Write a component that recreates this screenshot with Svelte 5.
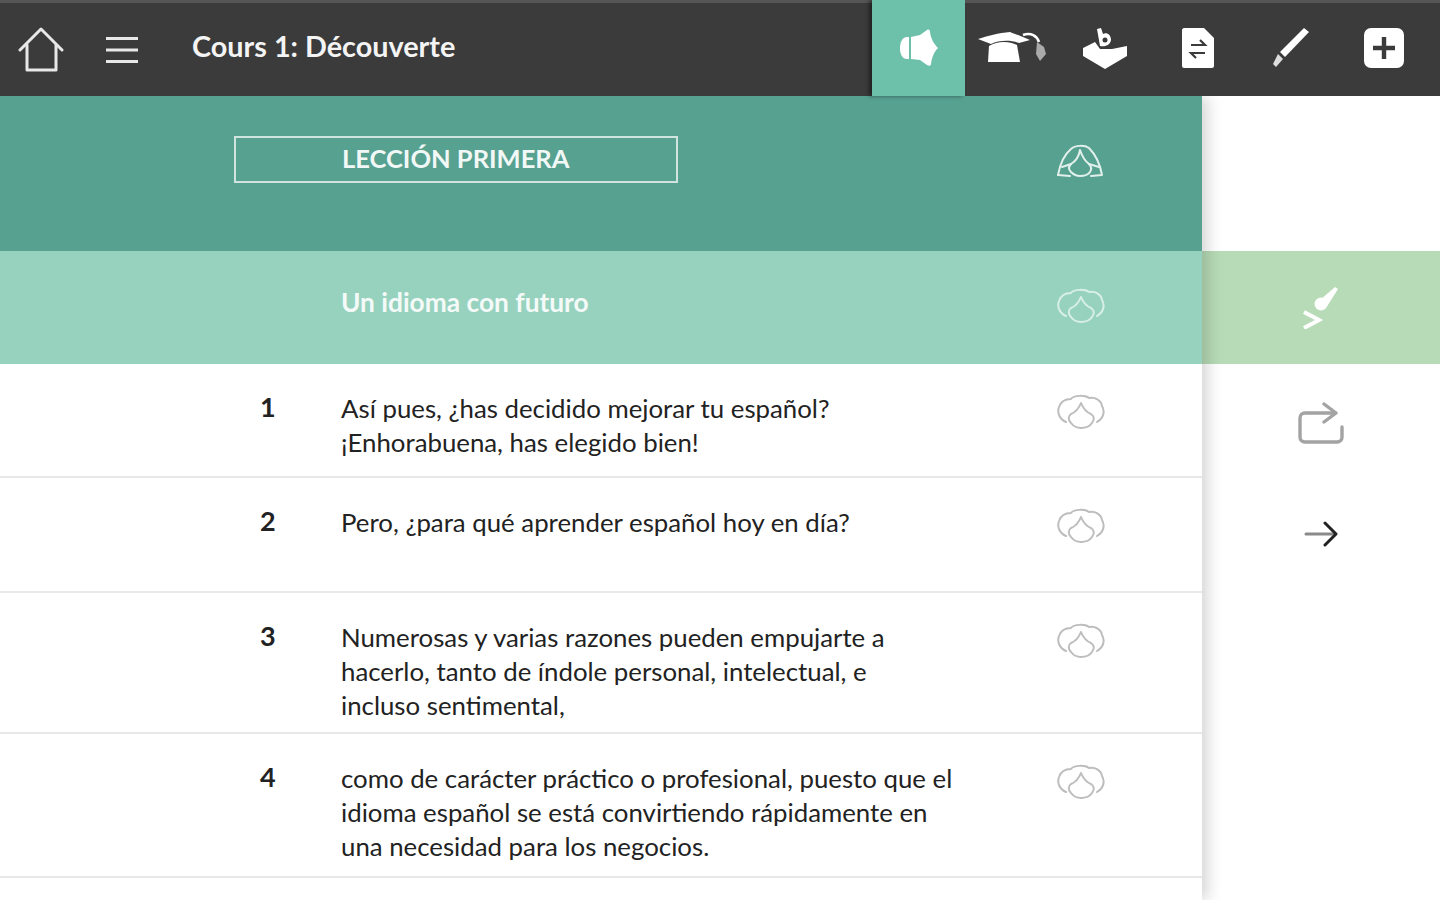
<script>
	const rows = [
		{ n: 1, lines: ['Así pues, ¿has decidido mejorar tu español?', '¡Enhorabuena, has elegido bien!'], h: 114 },
		{ n: 2, lines: ['Pero, ¿para qué aprender español hoy en día?'], h: 115 },
		{ n: 3, lines: ['Numerosas y varias razones pueden empujarte a', 'hacerlo, tanto de índole personal, intelectual, e', 'incluso sentimental,'], h: 141 },
		{ n: 4, lines: ['como de carácter práctico o profesional, puesto que el', 'idioma español se está convirtiendo rápidamente en', 'una necesidad para los negocios.'], h: 144 }
	];
</script>

{#snippet lips(cls)}
	<svg class="lips {cls}" viewBox="0 0 48 36" width="48" height="36" fill="none" stroke="currentColor" stroke-width="2" stroke-linejoin="round" stroke-linecap="round">
		<path d="M9 28C2 25 0 18 2 13C4 7 9 5 14 5C17 1 28 1 32 4C38 3 44 6 45 12C48 17 47 24 40 28" />
		<path d="M24 9C22 14 19 18 14 20C11 22 11 26 14 29C17 33 21 34 24 34C29 34 33 32 35 29C38 25 37 22 34 20C29 18 26 14 24 9Z" />
	</svg>
{/snippet}

<div class="page">
	<header class="topbar">
		<div class="nav">
			<svg class="home" viewBox="0 0 46 46" width="46" height="46" fill="none" stroke="#e8e8e8" stroke-width="3" stroke-linejoin="round" stroke-linecap="round">
				<path d="M2 24L23 3L44 24" />
				<path d="M9 19V44H38V19" />
			</svg>
			<svg class="burger" viewBox="0 0 32 26" width="32" height="26" fill="none" stroke="#e8e8e8" stroke-width="2.8">
				<path d="M0 1.5H32M0 13H32M0 24.5H32" />
			</svg>
			<span class="title">Cours 1: Découverte</span>
		</div>
		<div class="tools">
			<button class="tool active" type="button" aria-label="Audio">
				<svg viewBox="0 0 38 38" width="38" height="38" fill="#fff">
					<path d="M7 8C2 8 0 14 0 19C0 25 2 30 7 30H9V8Z" />
					<path d="M11 8L20 6L27 1C29 0 30 1 30 3C31 10 34 15 38 19C34 23 32 28 31 35C31 37 29 37 27 36L20 31L11 30Z" />
				</svg>
			</button>
			<button class="tool" type="button" aria-label="Cours">
				<svg viewBox="0 0 70 38" width="70" height="38" fill="#fff">
					<path d="M1 10C10 7 22 4 33 3C38 5 46 8 53 11L42 14C34 11 22 11 14 15Z" />
					<path d="M12 17C20 12 32 12 40 16L43 33H11Z" />
					<path d="M46 6C54 3 60 7 62 13" fill="none" stroke="#fff" stroke-width="2.6" />
					<path d="M60 13L67 18L69 25L63 32L59 25Z" fill="#aaa" />
				</svg>
			</button>
			<button class="tool" type="button" aria-label="Livre">
				<svg viewBox="0 0 46 46" width="46" height="46" fill="#fff">
					<path d="M1 23L13 17L18 24H30L45 21V31L23 44L1 31Z" />
					<path d="M15 4L19 3L21 9C25 7 29 10 29 15C28 20 24 22 18 21Z" />
					<circle cx="23" cy="15" r="2.5" fill="#3b3b3b" />
				</svg>
			</button>
			<button class="tool" type="button" aria-label="Traduction">
				<svg viewBox="0 0 34 42" width="34" height="42">
					<path d="M3 1H23L33 11V39C33 40 32 41 31 41H3C2 41 1 40 1 39V3C1 2 2 1 3 1Z" fill="#fff" />
					<path d="M10 18H24L19 13M24 26H10L15 31" fill="none" stroke="#3b3b3b" stroke-width="2.2" />
				</svg>
			</button>
			<button class="tool" type="button" aria-label="Notes">
				<svg viewBox="0 0 40 42" width="40" height="42" fill="#fff">
					<path d="M33 1L38 5L14 30L9 25Z" />
					<path d="M7 27L12 32L5 40L2 37Z" fill="#ddd" />
				</svg>
			</button>
			<button class="tool" type="button" aria-label="Ajouter">
				<svg viewBox="0 0 42 42" width="42" height="42">
					<rect x="1" y="1" width="40" height="40" rx="7" fill="#fff" />
					<path d="M21 10V32M10 21H32" stroke="#3b3b3b" stroke-width="4.4" />
				</svg>
			</button>
		</div>
	</header>

	<div class="body">
		<main class="lesson">
			<section class="banner">
				<div class="label">LECCIÓN PRIMERA</div>
				<svg class="lips top" viewBox="0 0 48 36" width="48" height="36" fill="none" stroke="currentColor" stroke-width="2" stroke-linejoin="round" stroke-linecap="round">
					<path d="M1 33C3 22 8 12 14 7C18 3 28 3 32 6C38 12 43 22 45 33L34 34" />
					<path d="M23 8C22 14 19 19 14 22C12 24 11 27 14 30C17 33 20 34 23 34C28 34 31 33 33 30C35 27 34 24 32 22C28 19 25 14 23 8Z" />
					<path d="M1 33L13 34M5 25L14 22M42 25L32 22" />
				</svg>
			</section>
			<section class="subtitle">
				<span>Un idioma con futuro</span>
				{@render lips('sub')}
			</section>
			{#each rows as row}
				<article class="row" style="height: {row.h}px">
					<span class="num">{row.n}</span>
					<p>
						{#each row.lines as line}
							<span>{line}</span>
						{/each}
					</p>
					{@render lips('item')}
				</article>
			{/each}
		</main>

		<aside class="side">
			<div class="side-check">
				<svg viewBox="0 0 36 42" width="36" height="42" fill="#fff">
					<circle cx="18" cy="17" r="6.5" />
					<path d="M32 0L35 2L23 21L17 13Z" />
					<path d="M1 25L16 33L1 41" fill="none" stroke="#fff" stroke-width="4" />
				</svg>
			</div>
			<div class="side-btn share">
				<svg viewBox="0 0 46 42" width="46" height="42" fill="none" stroke="#a3a3a3" stroke-width="3.4" stroke-linejoin="round" stroke-linecap="round">
					<path d="M37 11H7C4 11 2 13 2 16V35C2 38 4 40 7 40H39C42 40 44 38 44 35V25" />
					<path d="M26 2L38 11L26 20" />
				</svg>
			</div>
			<div class="side-btn next">
				<svg viewBox="0 0 34 26" width="34" height="26" fill="none" stroke-width="3" stroke-linejoin="round" stroke-linecap="round">
					<path d="M2 13H29" stroke="#8a8a8a" />
					<path d="M21 2L32 13L21 24" stroke="#222" />
				</svg>
			</div>
		</aside>
	</div>
</div>

<style>
	:global(body) {
		margin: 0;
		background: #fff;
		overflow: hidden;
	}

	.page {
		width: 1440px;
		height: 900px;
		overflow: hidden;
		font-family: Lato, "Open Sans", sans-serif;
		color: #222;
	}

	.topbar {
		position: relative;
		z-index: 3;
		display: flex;
		justify-content: space-between;
		height: 96px;
		background: #3b3b3b;
		box-shadow: inset 0 3px 0 #555;
	}

	.nav {
		display: flex;
		align-items: center;
		padding-left: 18px;
	}

	.home {
		margin-top: 2px;
	}

	.burger {
		margin: 4px 0 0 42px;
	}

	.title {
		margin: 0 0 0 54px;
		padding-bottom: 4px;
		font-size: 28.8px;
		font-weight: 700;
		color: #f4f4f4;
	}

	.tools {
		display: flex;
		padding-right: 10px;
	}

	.tool {
		display: flex;
		align-items: center;
		justify-content: center;
		width: 93px;
		padding: 0;
		border: 0;
		background: none;
	}

	.tool.active {
		background: #6dc0a9;
		box-shadow: -3px 0 4px rgba(0, 0, 0, .45);
	}

	.body {
		display: flex;
		height: 804px;
	}

	.lesson {
		position: relative;
		z-index: 2;
		width: 1202px;
		flex: none;
		box-shadow: 6px 0 14px rgba(0, 0, 0, .16);
		background: #fff;
	}

	.banner {
		display: flex;
		align-items: flex-start;
		height: 155px;
		background: #57a191;
		box-sizing: border-box;
		padding: 40px 0 0 234px;
	}

	.label {
		width: 444px;
		height: 47px;
		box-sizing: border-box;
		border: 2px solid #cfe4de;
		padding-left: 106px;
		font-size: 25.5px;
		line-height: 41px;
		color: #f2f8f6;
		font-weight: 700;
	}

	.subtitle {
		display: flex;
		align-items: center;
		height: 113px;
		padding-left: 341px;
		background: #97d2bf;
		font-size: 26.3px;
		font-weight: 700;
		color: #f4faf8;
	}

	.subtitle span {
		width: 716px;
		flex: none;
		padding-bottom: 11px;
	}

	.lips {
		flex: none;
	}

	.lips.top {
		margin: 6px 0 0 379px;
		color: #e2f0ec;
	}

	.lips.sub {
		margin-bottom: 3px;
		color: #d8efe7;
	}

	.lips.item {
		margin-top: 2px;
		color: #bdbdbd;
	}

	.row {
		display: flex;
		align-items: flex-start;
		box-sizing: border-box;
		border-bottom: 2px solid #e8e8e8;
		padding-top: 28px;
	}

	.num {
		width: 341px;
		flex: none;
		box-sizing: border-box;
		padding-left: 260px;
		font-size: 27px;
		font-weight: 700;
		line-height: 30px;
	}

	.row p {
		width: 716px;
		flex: none;
		margin: -1px 0 0;
		font-size: 25.8px;
		line-height: 34px;
	}

	.row p span {
		display: block;
		white-space: nowrap;
	}

	.side {
		flex: 1;
		background: #fff;
		padding-top: 155px;
	}

	.side-check {
		display: flex;
		align-items: center;
		justify-content: center;
		height: 113px;
		background: #b7dbb6;
	}

	.side-btn {
		display: flex;
		justify-content: center;
	}

	.share {
		padding-top: 38px;
	}

	.next {
		padding-top: 77px;
	}
</style>
